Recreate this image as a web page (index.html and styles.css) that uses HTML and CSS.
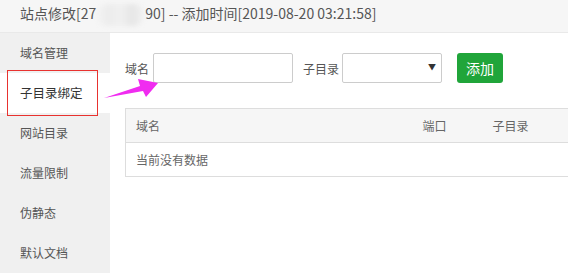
FILE: index.html
```html
<!DOCTYPE html>
<html lang="zh">
<head>
<meta charset="utf-8">
<link rel="stylesheet" href="styles.css">
</head>
<body>
<div class="page">
  <div class="title">站点修改[27<span class="blur"></span>90] -- 添加时间[2019-08-20 03:21:58]</div>
  <div class="main">
    <ul class="side">
      <li>域名管理</li>
      <li class="on">子目录绑定</li>
      <li>网站目录</li>
      <li>流量限制</li>
      <li>伪静态</li>
      <li>默认文档</li>
    </ul>
    <div class="content">
      <div class="form">
        <span class="lbl">域名</span>
        <input class="ipt" type="text">
        <span class="lbl lbl2">子目录</span>
        <div class="sel"><span class="caret">▼</span></div>
        <button class="btn">添加</button>
      </div>
      <table class="tbl">
        <thead>
          <tr><th class="c1">域名</th><th class="c2">端口</th><th class="c3">子目录</th></tr>
        </thead>
        <tbody>
          <tr><td colspan="3">当前没有数据</td></tr>
        </tbody>
      </table>
    </div>
  </div>
  <div class="mark"></div>
  <svg class="arrow" width="568" height="273" viewBox="0 0 568 273">
    <polygon points="104,98 140,86 138,79 158,83 146,97 143,91" fill="#f02cf0"/>
  </svg>
</div>
</body>
</html>
```
FILE: styles.css
```css
* { box-sizing: border-box; }
html, body { margin: 0; padding: 0; }
body {
  width: 568px;
  height: 273px;
  overflow: hidden;
  background: #fff;
  font-family: "Noto Sans CJK SC", "Liberation Sans", sans-serif;
  color: #555;
}
.page { position: relative; width: 568px; height: 273px; overflow: hidden; }
.title {
  height: 33px;
  line-height: 26px;
  padding-left: 20px;
  font-size: 14px;
  color: #555;
  background: #f6f6f6;
  border-bottom: 1px solid #e9e9e9;
  white-space: nowrap;
}
.blur {
  display: inline-block;
  width: 47px;
  height: 22px;
  margin: 0 1px;
  vertical-align: middle;
  border-radius: 10px;
  background: linear-gradient(90deg, #f3f3f3, #ececec 25%, #f0f0f0 50%, #e6e6e6 75%, #f2f2f2);
  filter: blur(2px);
}
.main { display: flex; height: 240px; }
.side {
  list-style: none;
  margin: 0;
  padding: 0;
  width: 110px;
  flex: none;
  background: #f0f0f0;
}
.side li {
  height: 40px;
  line-height: 40px;
  padding-left: 20px;
  font-size: 12px;
  color: #555;
}
.side li.on { background: #fff; color: #333; font-size: 12.5px; }
.content { flex: 1; padding: 20px 0 0 15px; min-width: 0; }
.form { display: flex; align-items: center; height: 30px; }
.lbl { font-size: 12px; color: #555; margin-right: 4px; }
.lbl2 { margin-left: 10px; margin-right: 3px; }
.ipt {
  width: 140px;
  height: 30px;
  border: 1px solid #ccc;
  border-radius: 2px;
  margin: 0;
  padding: 0;
  outline: none;
}
.sel {
  position: relative;
  width: 100px;
  height: 30px;
  border: 1px solid #ccc;
  border-radius: 2px;
  background: #fff;
}
.caret {
  position: absolute;
  right: 5px;
  top: 7px;
  font-size: 8px;
  color: #333;
}
.btn {
  margin-left: 15px;
  width: 46px;
  height: 30px;
  border: 0;
  border-radius: 3px;
  background: #20a53a;
  color: #fff;
  font-family: inherit;
  font-size: 14px;
  padding: 0;
}
.tbl {
  margin-top: 25px;
  width: 448px;
  border-collapse: collapse;
  border: 1px solid #ddd;
  font-size: 12px;
  color: #666;
}
.tbl th {
  background: #f6f6f6;
  font-weight: normal;
  text-align: left;
  height: 34px;
  padding: 0 10px;
  border-bottom: 1px solid #ddd;
}
.tbl .c1 { width: 287px; }
.tbl .c2 { width: 70px; }
.tbl td { height: 34px; padding: 0 10px; }
.mark {
  position: absolute;
  left: 7px;
  top: 70px;
  width: 91px;
  height: 46px;
  border: 1px solid #e8322f;
}
.arrow { position: absolute; left: 0; top: 0; pointer-events: none; }
```
